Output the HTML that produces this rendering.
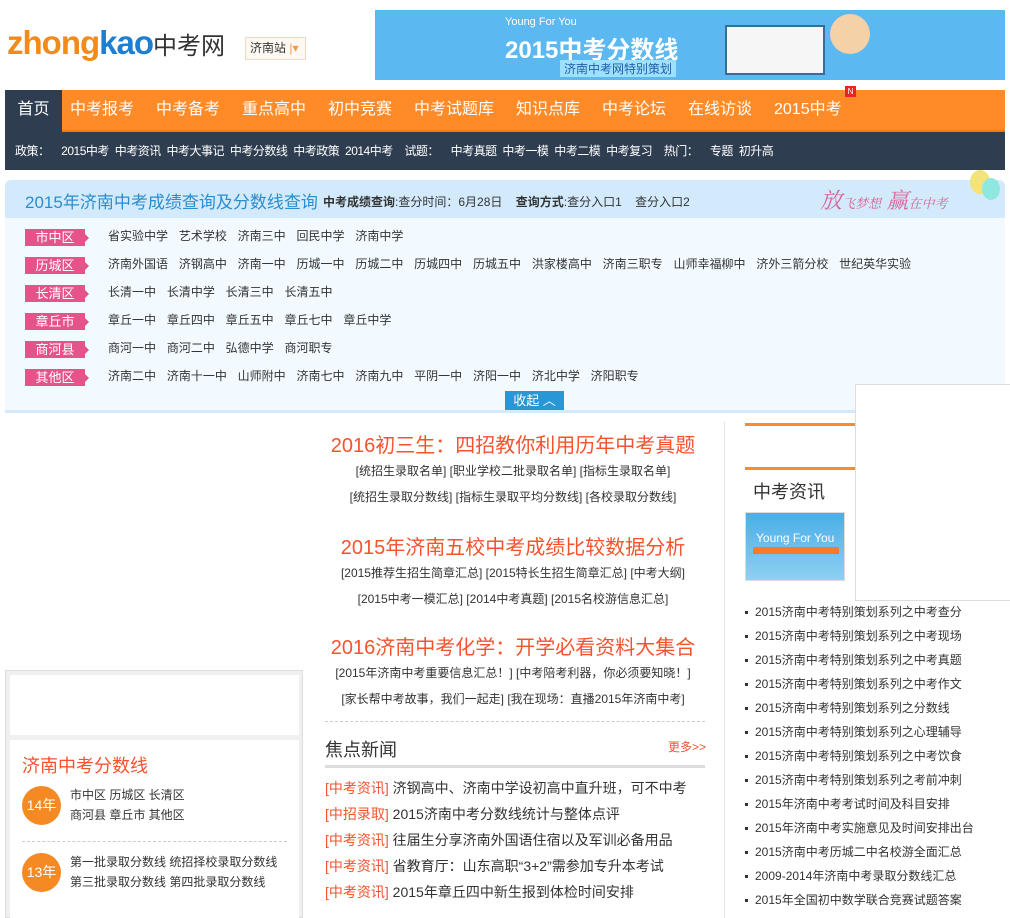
<!DOCTYPE html>
<html><head><meta charset="utf-8"><style>
*{margin:0;padding:0;box-sizing:border-box}
body{width:1010px;height:918px;overflow:hidden;background:#fff;font-family:"Liberation Sans","Noto Sans CJK SC",sans-serif;font-size:12px;color:#333;position:relative}
.a{position:absolute;white-space:nowrap}
.nav span{position:absolute;top:0;line-height:40px;color:#fff;font-size:16px}
.lab{position:absolute;left:25px;width:60px;height:17px;background:#e4538a;color:#fff;font-size:13px;line-height:17px;text-align:center}
.lab:after{content:"";position:absolute;right:-4px;top:5px;border-left:4px solid #e4538a;border-top:4px solid transparent;border-bottom:4px solid transparent}
.row{position:absolute;left:108px;font-size:12px;color:#333;word-spacing:7.5px;line-height:17px;white-space:nowrap}
.h{position:absolute;left:290px;width:446px;text-align:center;color:#f5532e;font-size:20px;white-space:nowrap}
.l{position:absolute;left:290px;width:446px;text-align:center;color:#333;font-size:12px;white-space:nowrap}
.news div{height:26px;line-height:26px;font-size:14px;white-space:nowrap}
.news b{font-weight:normal;color:#f5532e}
.rl div{height:24px;line-height:24px;font-size:12px;color:#333;white-space:nowrap}
.rl div:before{content:"";display:inline-block;width:3px;height:3px;background:#333;margin-right:7px;vertical-align:middle}
</style></head><body>
<div class="a" style="left:7px;top:24px;font-size:33px;font-weight:bold;letter-spacing:-1px;color:#f28a1c">zhong<span style="color:#1d7fd1">kao</span><span style="color:#333;font-weight:normal;font-size:24px;letter-spacing:0">中考网</span></div>
<div class="a" style="left:245px;top:37px;width:61px;height:23px;border:1px solid #f4d9c0;background:#fdf8f2;font-size:12px;line-height:21px;padding-left:4px">济南站<span style="color:#f39a4a"> |▾</span></div>
<div class="a" style="left:375px;top:10px;width:630px;height:70px;background:#5bb8f0">
<div class="a" style="left:130px;top:6px;color:#fff;font-size:11px">Young For You</div>
<div class="a" style="left:130px;top:20px;color:#fff;font-size:24px;font-weight:bold">2015中考分数线</div>
<div class="a" style="left:185px;top:50px;color:#1d5fa8;font-size:12px;background:#9fe0ff;padding:0 4px">济南中考网特别策划</div>
<div class="a" style="left:350px;top:15px;width:100px;height:50px;background:#f6f6f6;border:2px solid #3a6c9a"></div>
<div class="a" style="left:455px;top:4px;width:40px;height:40px;border-radius:50%;background:#f5d1a8"></div>
</div>
<div class="a nav" style="left:5px;top:90px;width:1000px;height:42px;background:#ff8a28;border-bottom:2px solid #f47a10">
<span style="left:0;width:57px;height:42px;background:#2e3d50;text-align:center">首页</span>
<span style="left:65px">中考报考</span><span style="left:151px">中考备考</span><span style="left:237px">重点高中</span><span style="left:323px">初中竞赛</span><span style="left:409px">中考试题库</span><span style="left:511px">知识点库</span><span style="left:597px">中考论坛</span><span style="left:683px">在线访谈</span><span style="left:769px">2015中考</span>
<div class="a" style="left:840px;top:-4px;width:11px;height:11px;background:#e22;color:#fff;font-size:8px;line-height:11px;text-align:center">N</div>
</div>
<div class="a" style="left:5px;top:132px;width:1000px;height:38px;background:#2e3d50;color:#fff;font-size:12px;line-height:38px;padding-left:10px;word-spacing:3px;letter-spacing:-0.5px">政策： &nbsp;2015中考 中考资讯 中考大事记 中考分数线 中考政策 2014中考 &nbsp;试题： &nbsp;中考真题 中考一模 中考二模 中考复习 &nbsp;热门： &nbsp;专题 初升高</div>
<div class="a" style="left:5px;top:180px;width:1000px;height:233px;background:#f2faff;border-bottom:3px solid #d2eafb;border-radius:6px 6px 0 0"></div>
<div class="a" style="left:5px;top:180px;width:1000px;height:38px;background:#d2eafb;border-radius:6px 6px 0 0"></div>
<div class="a" style="left:25px;top:188px;font-size:17px;color:#2a8dd0">2015年济南中考成绩查询及分数线查询</div>
<div class="a" style="left:323px;top:193px;font-size:12px;color:#333"><b>中考成绩查询</b>:查分时间：6月28日 &nbsp;&nbsp;&nbsp;<b>查询方式</b>:查分入口1 &nbsp;&nbsp;&nbsp;查分入口2</div>
<div class="a" style="left:820px;top:184px;font-size:22px;color:#d8659a;font-style:italic;font-family:'Liberation Serif','Noto Serif CJK SC',serif">放<small style="font-size:13px">飞梦想</small> 赢<small style="font-size:13px">在中考</small></div>
<div class="a" style="left:970px;top:170px;width:20px;height:24px;border-radius:50%;background:#f4e27a"></div>
<div class="a" style="left:982px;top:178px;width:18px;height:22px;border-radius:50%;background:#8ee8e0"></div>
<div class="lab" style="top:229px">市中区</div><div class="row" style="top:228px">省实验中学 艺术学校 济南三中 回民中学 济南中学</div>
<div class="lab" style="top:257px">历城区</div><div class="row" style="top:256px">济南外国语 济钢高中 济南一中 历城一中 历城二中 历城四中 历城五中 洪家楼高中 济南三职专 山师幸福柳中 济外三箭分校 世纪英华实验</div>
<div class="lab" style="top:285px">长清区</div><div class="row" style="top:284px">长清一中 长清中学 长清三中 长清五中</div>
<div class="lab" style="top:313px">章丘市</div><div class="row" style="top:312px">章丘一中 章丘四中 章丘五中 章丘七中 章丘中学</div>
<div class="lab" style="top:341px">商河县</div><div class="row" style="top:340px">商河一中 商河二中 弘德中学 商河职专</div>
<div class="lab" style="top:369px">其他区</div><div class="row" style="top:368px">济南二中 济南十一中 山师附中 济南七中 济南九中 平阴一中 济阳一中 济北中学 济阳职专</div>
<div class="a" style="left:505px;top:391px;width:59px;height:19px;background:#2897d6;color:#fff;font-size:13px;line-height:19px;text-align:center">收起 ︿</div>

<div class="h" style="top:429px">2016初三生：四招教你利用历年中考真题</div>
<div class="l" style="top:462px">[统招生录取名单] [职业学校二批录取名单] [指标生录取名单]</div>
<div class="l" style="top:488px">[统招生录取分数线] [指标生录取平均分数线] [各校录取分数线]</div>
<div class="h" style="top:531px">2015年济南五校中考成绩比较数据分析</div>
<div class="l" style="top:564px">[2015推荐生招生简章汇总] [2015特长生招生简章汇总] [中考大纲]</div>
<div class="l" style="top:590px">[2015中考一模汇总] [2014中考真题] [2015名校游信息汇总]</div>
<div class="h" style="top:631px">2016济南中考化学：开学必看资料大集合</div>
<div class="l" style="top:664px">[2015年济南中考重要信息汇总！] [中考陪考利器，你必须要知晓！]</div>
<div class="l" style="top:690px">[家长帮中考故事，我们一起走] [我在现场：直播2015年济南中考]</div>
<div class="a" style="left:325px;top:721px;width:380px;border-top:1px dashed #ccc"></div>
<div class="a" style="left:325px;top:736px;font-size:18px;color:#333">焦点新闻</div>
<div class="a" style="left:668px;top:738px;font-size:12px;color:#f5532e">更多&gt;&gt;</div>
<div class="a" style="left:325px;top:765px;width:380px;height:3px;background:#ddd"></div>
<div class="a news" style="left:325px;top:775px">
<div><b>[中考资讯]</b> 济钢高中、济南中学设初高中直升班，可不中考</div>
<div><b>[中招录取]</b> 2015济南中考分数线统计与整体点评</div>
<div><b>[中考资讯]</b> 往届生分享济南外国语住宿以及军训必备用品</div>
<div><b>[中考资讯]</b> 省教育厅：山东高职“3+2”需参加专升本考试</div>
<div><b>[中考资讯]</b> 2015年章丘四中新生报到体检时间安排</div>
</div>

<div class="a" style="left:5px;top:670px;width:298px;height:248px;background:#f0f0f0;border:1px solid #ddd"></div>
<div class="a" style="left:10px;top:675px;width:289px;height:60px;background:#fff"></div>
<div class="a" style="left:10px;top:740px;width:289px;height:178px;background:#fff"></div>
<div class="a" style="left:22px;top:752px;font-size:18px;color:#f5532e">济南中考分数线</div>
<div class="a" style="left:22px;top:786px;width:39px;height:39px;border-radius:50%;background:#f58a25;color:#fff;font-size:14px;line-height:39px;text-align:center">14年</div>
<div class="a" style="left:70px;top:785px;font-size:12px;line-height:20px">市中区 历城区 长清区<br>商河县 章丘市 其他区</div>
<div class="a" style="left:22px;top:841px;width:265px;border-top:1px dashed #ccc"></div>
<div class="a" style="left:22px;top:853px;width:39px;height:39px;border-radius:50%;background:#f58a25;color:#fff;font-size:14px;line-height:39px;text-align:center">13年</div>
<div class="a" style="left:70px;top:852px;font-size:12px;line-height:20px">第一批录取分数线 统招择校录取分数线<br>第三批录取分数线 第四批录取分数线</div>

<div class="a" style="left:724px;top:422px;width:1px;height:496px;background:#e5e5e5"></div>
<div class="a" style="left:745px;top:423px;width:115px;height:3px;background:#ff8a28"></div>
<div class="a" style="left:745px;top:467px;width:115px;height:3px;background:#ff8a28"></div>
<div class="a" style="left:753px;top:478px;font-size:18px;color:#333">中考资讯</div>
<div class="a" style="left:745px;top:512px;width:100px;height:69px;background:linear-gradient(#4aaee8,#8ed0f2);border:1px solid #ddd">
<div class="a" style="left:10px;top:18px;color:#fff;font-size:12px">Young For You</div>
<div class="a" style="left:7px;top:34px;width:86px;height:7px;background:#f47a30"></div></div>
<div class="a rl" style="left:745px;top:600px">
<div>2015济南中考特别策划系列之中考查分</div><div>2015济南中考特别策划系列之中考现场</div><div>2015济南中考特别策划系列之中考真题</div><div>2015济南中考特别策划系列之中考作文</div><div>2015济南中考特别策划系列之分数线</div><div>2015济南中考特别策划系列之心理辅导</div><div>2015济南中考特别策划系列之中考饮食</div><div>2015济南中考特别策划系列之考前冲刺</div><div>2015年济南中考考试时间及科目安排</div><div>2015年济南中考实施意见及时间安排出台</div><div>2015济南中考历城二中名校游全面汇总</div><div>2009-2014年济南中考录取分数线汇总</div><div>2015年全国初中数学联合竞赛试题答案</div>
</div>
<div class="a" style="left:855px;top:384px;width:160px;height:217px;background:#fff;border:1px solid #ddd"></div>
</body></html>
